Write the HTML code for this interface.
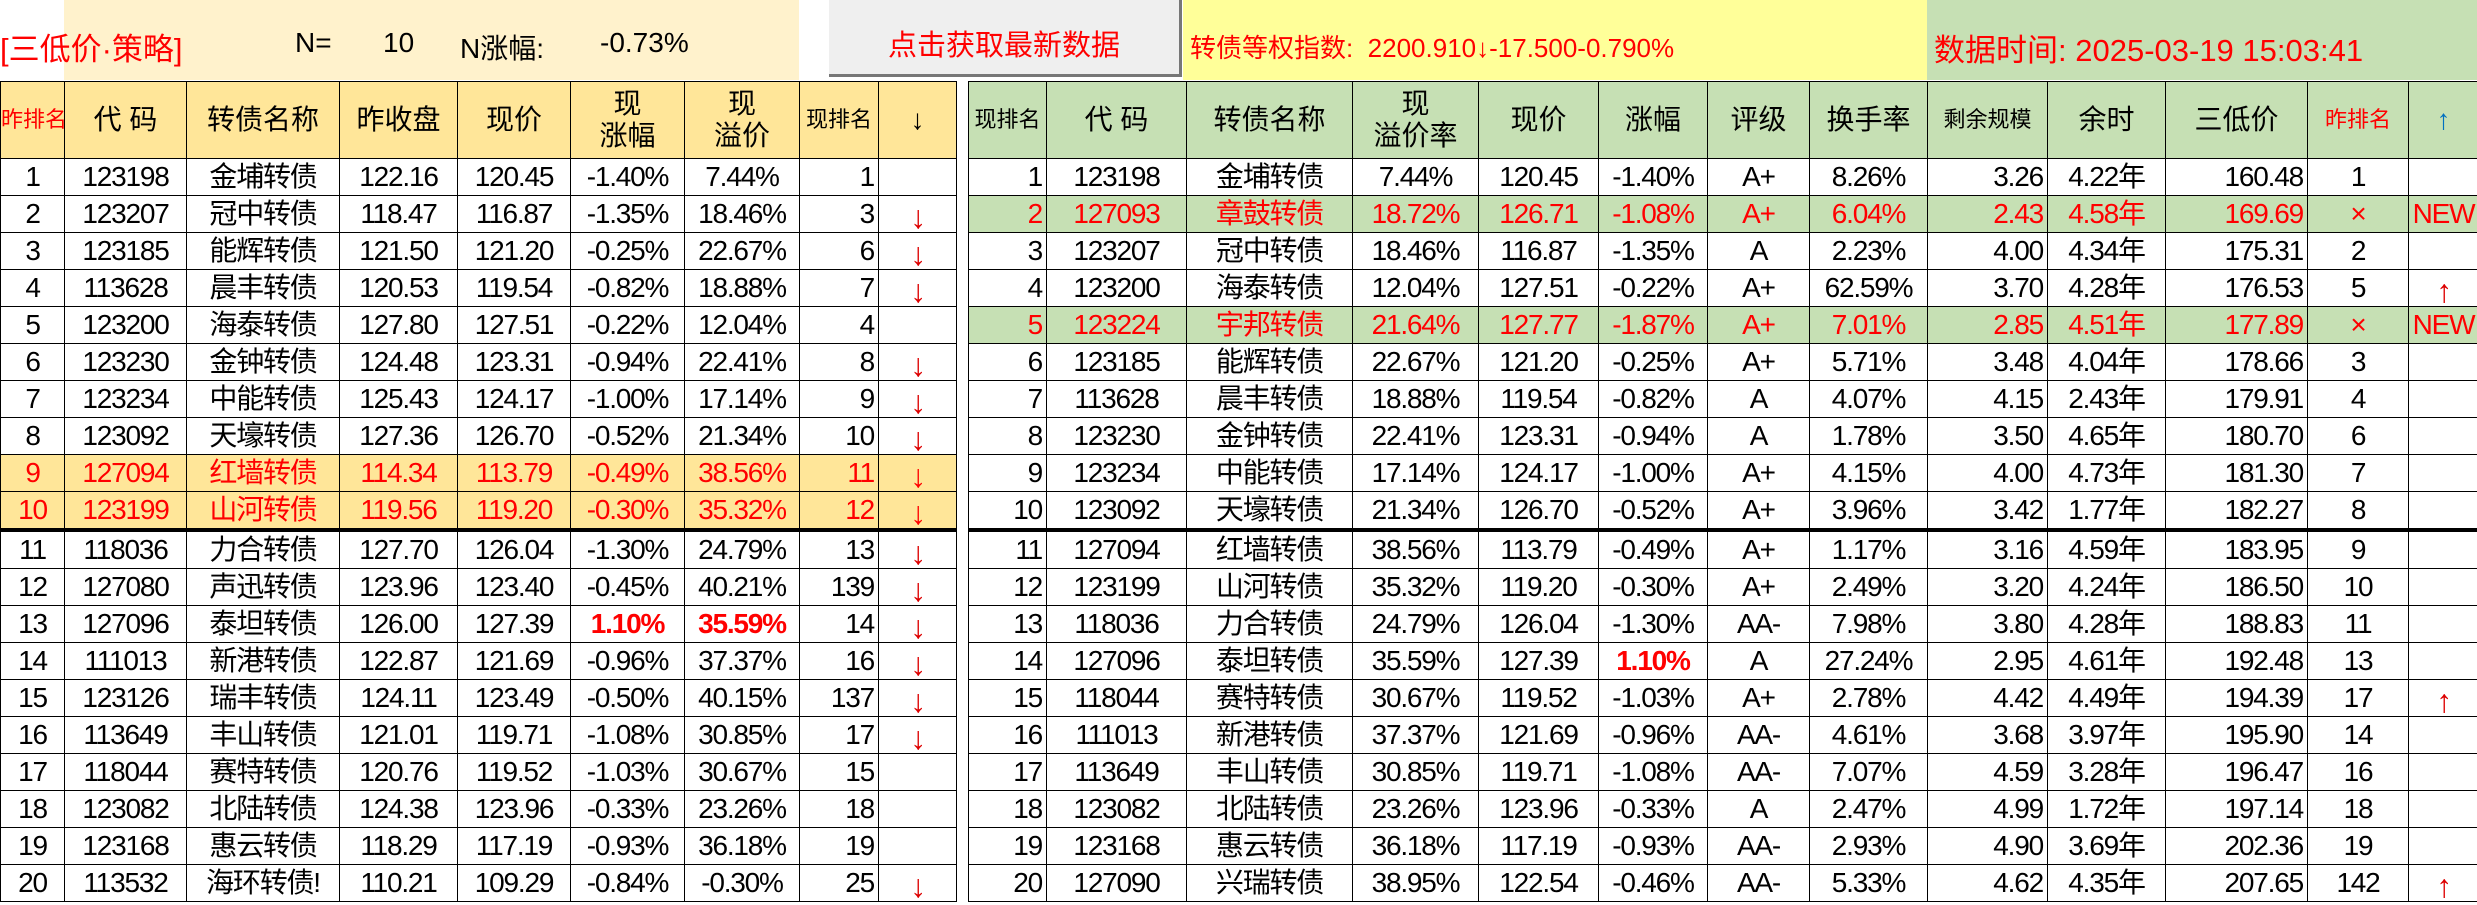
<!DOCTYPE html>
<html><head><meta charset="utf-8"><style>
body{margin:0;width:2477px;height:905px;overflow:hidden;background:#fff;font-family:"Liberation Sans Narrow","Liberation Sans","Noto Sans CJK SC",sans-serif;position:relative}
.abs{position:absolute}
table{border-collapse:collapse;table-layout:fixed;position:absolute;top:81px}
td{border:1.5px solid #000;height:36px;line-height:30px;padding:0 4px;font-size:28px;letter-spacing:-1.2px;text-align:center;white-space:nowrap;overflow:hidden;color:#000}
tr.h td{height:76px;line-height:1.15;letter-spacing:0}
#L tr.h td{background:#ffe699}
#R tr.h td{background:#c6e0b4}
.r{text-align:right}
.red td{color:#f00}
.yl td{background:#ffe699}
.gr td{background:#c6e0b4}
.thick td{border-bottom:4px solid #000}
.rd{color:#f00}
.b{color:#f00;font-weight:bold}
.ar{color:#d00;font-size:32px;vertical-align:bottom}
.sm{font-size:22px}
</style></head><body>
<div class="abs" style="left:64px;top:0;width:735px;height:80px;background:#fff2cc"></div>
<div class="abs" style="left:0;top:24px;font-size:31px;color:#f00">[三低价·策略]</div>
<div class="abs" style="left:295px;top:27px;font-size:28px">N=</div>
<div class="abs" style="left:383px;top:27px;font-size:28px">10</div>
<div class="abs" style="left:460px;top:27px;font-size:28px">N涨幅:</div>
<div class="abs" style="left:600px;top:27px;font-size:28px">-0.73%</div>
<div class="abs" style="left:829px;top:0;width:350px;height:74px;background:#efefef;border-right:3px solid #777;border-bottom:3px solid #777"></div>
<div class="abs" style="left:888px;top:22px;font-size:29px;color:#f00">点击获取最新数据</div>
<div class="abs" style="left:1183px;top:0;width:744px;height:80px;background:#ffff99"></div>
<div class="abs" style="left:1190px;top:28px;font-size:26px;color:#f00">转债等权指数:&nbsp; 2200.910↓-17.500-0.790%</div>
<div class="abs" style="left:1927px;top:0;width:550px;height:80px;background:#c6e0b4"></div>
<div class="abs" style="left:1934px;top:25px;font-size:31px;color:#f00">数据时间: 2025-03-19 15:03:41</div>

<table id="L" style="left:0;width:956px">
<colgroup><col style="width:64px"><col style="width:122px"><col style="width:153px"><col style="width:118px"><col style="width:113px"><col style="width:114px"><col style="width:115px"><col style="width:79px"><col style="width:78px"></colgroup>
<tr class="h"><td class="rd sm" style="padding:0">昨排名</td><td>代 码</td><td>转债名称</td><td>昨收盘</td><td>现价</td><td>现<br>涨幅</td><td>现<br>溢价</td><td class="sm">现排名</td><td>↓</td></tr>
<tr><td>1</td><td>123198</td><td>金埔转债</td><td>122.16</td><td>120.45</td><td>-1.40%</td><td>7.44%</td><td class="r">1</td><td></td></tr>
<tr><td>2</td><td>123207</td><td>冠中转债</td><td>118.47</td><td>116.87</td><td>-1.35%</td><td>18.46%</td><td class="r">3</td><td class="ar">↓</td></tr>
<tr><td>3</td><td>123185</td><td>能辉转债</td><td>121.50</td><td>121.20</td><td>-0.25%</td><td>22.67%</td><td class="r">6</td><td class="ar">↓</td></tr>
<tr><td>4</td><td>113628</td><td>晨丰转债</td><td>120.53</td><td>119.54</td><td>-0.82%</td><td>18.88%</td><td class="r">7</td><td class="ar">↓</td></tr>
<tr><td>5</td><td>123200</td><td>海泰转债</td><td>127.80</td><td>127.51</td><td>-0.22%</td><td>12.04%</td><td class="r">4</td><td></td></tr>
<tr><td>6</td><td>123230</td><td>金钟转债</td><td>124.48</td><td>123.31</td><td>-0.94%</td><td>22.41%</td><td class="r">8</td><td class="ar">↓</td></tr>
<tr><td>7</td><td>123234</td><td>中能转债</td><td>125.43</td><td>124.17</td><td>-1.00%</td><td>17.14%</td><td class="r">9</td><td class="ar">↓</td></tr>
<tr><td>8</td><td>123092</td><td>天壕转债</td><td>127.36</td><td>126.70</td><td>-0.52%</td><td>21.34%</td><td class="r">10</td><td class="ar">↓</td></tr>
<tr class="yl red"><td>9</td><td>127094</td><td>红墙转债</td><td>114.34</td><td>113.79</td><td>-0.49%</td><td>38.56%</td><td class="r">11</td><td class="ar">↓</td></tr>
<tr class="yl red thick"><td>10</td><td>123199</td><td>山河转债</td><td>119.56</td><td>119.20</td><td>-0.30%</td><td>35.32%</td><td class="r">12</td><td class="ar">↓</td></tr>
<tr><td>11</td><td>118036</td><td>力合转债</td><td>127.70</td><td>126.04</td><td>-1.30%</td><td>24.79%</td><td class="r">13</td><td class="ar">↓</td></tr>
<tr><td>12</td><td>127080</td><td>声迅转债</td><td>123.96</td><td>123.40</td><td>-0.45%</td><td>40.21%</td><td class="r">139</td><td class="ar">↓</td></tr>
<tr><td>13</td><td>127096</td><td>泰坦转债</td><td>126.00</td><td>127.39</td><td class="b">1.10%</td><td class="b">35.59%</td><td class="r">14</td><td class="ar">↓</td></tr>
<tr><td>14</td><td>111013</td><td>新港转债</td><td>122.87</td><td>121.69</td><td>-0.96%</td><td>37.37%</td><td class="r">16</td><td class="ar">↓</td></tr>
<tr><td>15</td><td>123126</td><td>瑞丰转债</td><td>124.11</td><td>123.49</td><td>-0.50%</td><td>40.15%</td><td class="r">137</td><td class="ar">↓</td></tr>
<tr><td>16</td><td>113649</td><td>丰山转债</td><td>121.01</td><td>119.71</td><td>-1.08%</td><td>30.85%</td><td class="r">17</td><td class="ar">↓</td></tr>
<tr><td>17</td><td>118044</td><td>赛特转债</td><td>120.76</td><td>119.52</td><td>-1.03%</td><td>30.67%</td><td class="r">15</td><td></td></tr>
<tr><td>18</td><td>123082</td><td>北陆转债</td><td>124.38</td><td>123.96</td><td>-0.33%</td><td>23.26%</td><td class="r">18</td><td></td></tr>
<tr><td>19</td><td>123168</td><td>惠云转债</td><td>118.29</td><td>117.19</td><td>-0.93%</td><td>36.18%</td><td class="r">19</td><td></td></tr>
<tr><td>20</td><td>113532</td><td>海环转债!</td><td>110.21</td><td>109.29</td><td>-0.84%</td><td>-0.30%</td><td class="r">25</td><td class="ar">↓</td></tr>
</table>

<table id="R" style="left:968px;width:1510px">
<colgroup><col style="width:78px"><col style="width:140px"><col style="width:166px"><col style="width:126px"><col style="width:120px"><col style="width:109px"><col style="width:102px"><col style="width:118px"><col style="width:120px"><col style="width:118px"><col style="width:142px"><col style="width:101px"><col style="width:70px"></colgroup>
<tr class="h"><td class="sm" style="padding:0">现排名</td><td>代 码</td><td>转债名称</td><td>现<br>溢价率</td><td>现价</td><td>涨幅</td><td>评级</td><td>换手率</td><td class="sm">剩余规模</td><td>余时</td><td>三低价</td><td class="rd sm">昨排名</td><td style="color:#0070c0">↑</td></tr>
<tr><td class="r">1</td><td>123198</td><td>金埔转债</td><td>7.44%</td><td>120.45</td><td>-1.40%</td><td>A+</td><td>8.26%</td><td class="r">3.26</td><td>4.22年</td><td class="r">160.48</td><td>1</td><td></td></tr>
<tr class="gr red"><td class="r">2</td><td>127093</td><td>章鼓转债</td><td>18.72%</td><td>126.71</td><td>-1.08%</td><td>A+</td><td>6.04%</td><td class="r">2.43</td><td>4.58年</td><td class="r">169.69</td><td>×</td><td style="padding:0">NEW</td></tr>
<tr><td class="r">3</td><td>123207</td><td>冠中转债</td><td>18.46%</td><td>116.87</td><td>-1.35%</td><td>A</td><td>2.23%</td><td class="r">4.00</td><td>4.34年</td><td class="r">175.31</td><td>2</td><td></td></tr>
<tr><td class="r">4</td><td>123200</td><td>海泰转债</td><td>12.04%</td><td>127.51</td><td>-0.22%</td><td>A+</td><td>62.59%</td><td class="r">3.70</td><td>4.28年</td><td class="r">176.53</td><td>5</td><td class="ar">↑</td></tr>
<tr class="gr red"><td class="r">5</td><td>123224</td><td>宇邦转债</td><td>21.64%</td><td>127.77</td><td>-1.87%</td><td>A+</td><td>7.01%</td><td class="r">2.85</td><td>4.51年</td><td class="r">177.89</td><td>×</td><td style="padding:0">NEW</td></tr>
<tr><td class="r">6</td><td>123185</td><td>能辉转债</td><td>22.67%</td><td>121.20</td><td>-0.25%</td><td>A+</td><td>5.71%</td><td class="r">3.48</td><td>4.04年</td><td class="r">178.66</td><td>3</td><td></td></tr>
<tr><td class="r">7</td><td>113628</td><td>晨丰转债</td><td>18.88%</td><td>119.54</td><td>-0.82%</td><td>A</td><td>4.07%</td><td class="r">4.15</td><td>2.43年</td><td class="r">179.91</td><td>4</td><td></td></tr>
<tr><td class="r">8</td><td>123230</td><td>金钟转债</td><td>22.41%</td><td>123.31</td><td>-0.94%</td><td>A</td><td>1.78%</td><td class="r">3.50</td><td>4.65年</td><td class="r">180.70</td><td>6</td><td></td></tr>
<tr><td class="r">9</td><td>123234</td><td>中能转债</td><td>17.14%</td><td>124.17</td><td>-1.00%</td><td>A+</td><td>4.15%</td><td class="r">4.00</td><td>4.73年</td><td class="r">181.30</td><td>7</td><td></td></tr>
<tr class="thick"><td class="r">10</td><td>123092</td><td>天壕转债</td><td>21.34%</td><td>126.70</td><td>-0.52%</td><td>A+</td><td>3.96%</td><td class="r">3.42</td><td>1.77年</td><td class="r">182.27</td><td>8</td><td></td></tr>
<tr><td class="r">11</td><td>127094</td><td>红墙转债</td><td>38.56%</td><td>113.79</td><td>-0.49%</td><td>A+</td><td>1.17%</td><td class="r">3.16</td><td>4.59年</td><td class="r">183.95</td><td>9</td><td></td></tr>
<tr><td class="r">12</td><td>123199</td><td>山河转债</td><td>35.32%</td><td>119.20</td><td>-0.30%</td><td>A+</td><td>2.49%</td><td class="r">3.20</td><td>4.24年</td><td class="r">186.50</td><td>10</td><td></td></tr>
<tr><td class="r">13</td><td>118036</td><td>力合转债</td><td>24.79%</td><td>126.04</td><td>-1.30%</td><td>AA-</td><td>7.98%</td><td class="r">3.80</td><td>4.28年</td><td class="r">188.83</td><td>11</td><td></td></tr>
<tr><td class="r">14</td><td>127096</td><td>泰坦转债</td><td>35.59%</td><td>127.39</td><td class="b">1.10%</td><td>A</td><td>27.24%</td><td class="r">2.95</td><td>4.61年</td><td class="r">192.48</td><td>13</td><td></td></tr>
<tr><td class="r">15</td><td>118044</td><td>赛特转债</td><td>30.67%</td><td>119.52</td><td>-1.03%</td><td>A+</td><td>2.78%</td><td class="r">4.42</td><td>4.49年</td><td class="r">194.39</td><td>17</td><td class="ar">↑</td></tr>
<tr><td class="r">16</td><td>111013</td><td>新港转债</td><td>37.37%</td><td>121.69</td><td>-0.96%</td><td>AA-</td><td>4.61%</td><td class="r">3.68</td><td>3.97年</td><td class="r">195.90</td><td>14</td><td></td></tr>
<tr><td class="r">17</td><td>113649</td><td>丰山转债</td><td>30.85%</td><td>119.71</td><td>-1.08%</td><td>AA-</td><td>7.07%</td><td class="r">4.59</td><td>3.28年</td><td class="r">196.47</td><td>16</td><td></td></tr>
<tr><td class="r">18</td><td>123082</td><td>北陆转债</td><td>23.26%</td><td>123.96</td><td>-0.33%</td><td>A</td><td>2.47%</td><td class="r">4.99</td><td>1.72年</td><td class="r">197.14</td><td>18</td><td></td></tr>
<tr><td class="r">19</td><td>123168</td><td>惠云转债</td><td>36.18%</td><td>117.19</td><td>-0.93%</td><td>AA-</td><td>2.93%</td><td class="r">4.90</td><td>3.69年</td><td class="r">202.36</td><td>19</td><td></td></tr>
<tr><td class="r">20</td><td>127090</td><td>兴瑞转债</td><td>38.95%</td><td>122.54</td><td>-0.46%</td><td>AA-</td><td>5.33%</td><td class="r">4.62</td><td>4.35年</td><td class="r">207.65</td><td>142</td><td class="ar">↑</td></tr>
</table>
</body></html>
